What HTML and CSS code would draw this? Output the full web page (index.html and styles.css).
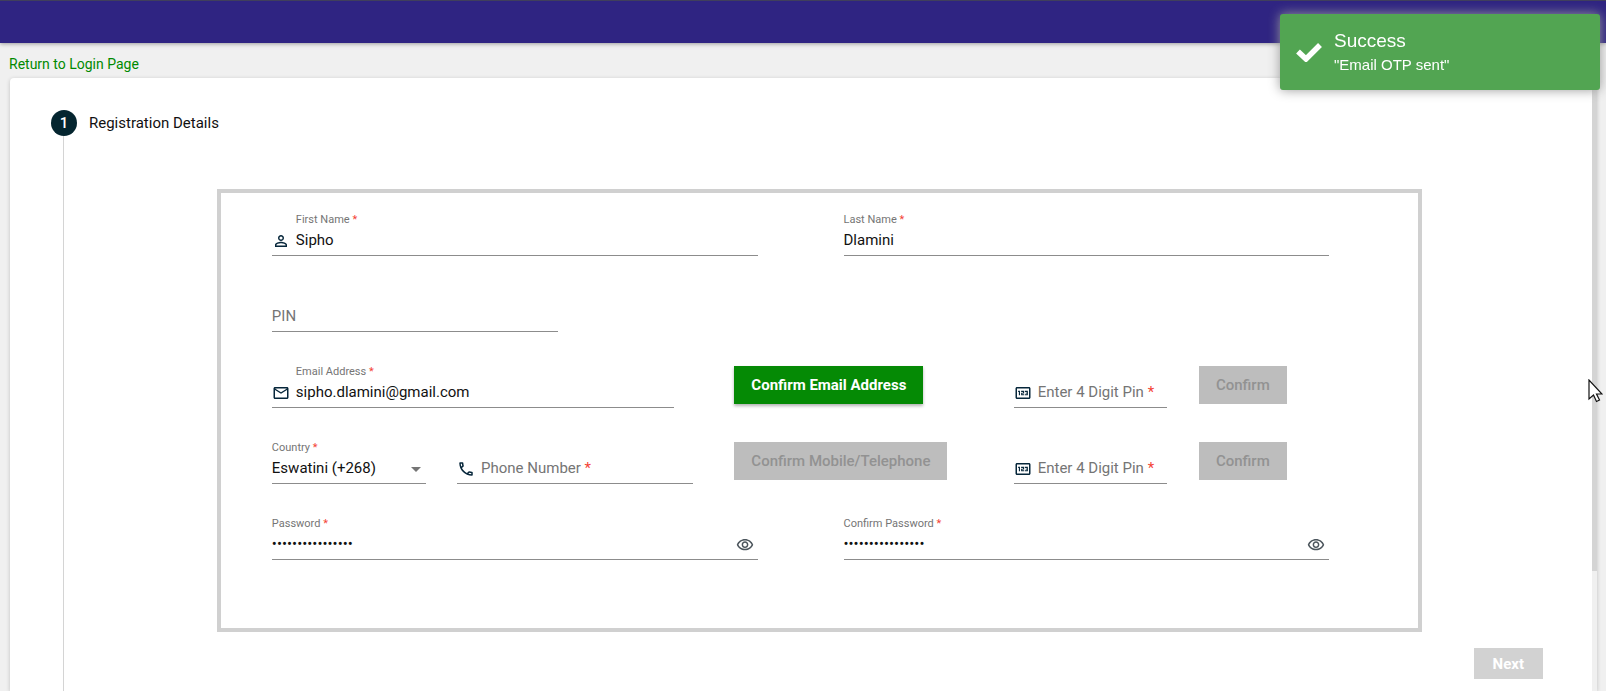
FILE: index.html
```html
<!DOCTYPE html>
<html lang="en">
	<head>
		<meta charset="utf-8">
		<title>Registration</title>
		<meta name="viewport" content="width=device-width, initial-scale=1.0">
		<link rel="stylesheet" href="styles.css">
	</head>
	<body>
		<header class="topbar"></header>
		<nav class="return">
			<a href="#login">Return to Login Page</a>
		</nav>
		<main class="card">
			<div class="stepper">
				<div class="step-header">
					<span class="step-number">1</span>
					<span class="step-label">Registration Details</span>
				</div>
				<form class="step-content">
					<div class="details">
						<div class="row names">
							<div class="field has-icon">
								<label for="first-name">First Name <span class="req">*</span></label>
								<div class="control">
									<svg class="icon" viewBox="0 0 24 24"><path d="M12 5.9a2.1 2.1 0 1 1 0 4.2 2.1 2.1 0 0 1 0-4.2m0 9c2.97 0 6.1 1.46 6.1 2.1v1.1H5.9V17c0-.64 3.13-2.1 6.1-2.1M12 4C9.79 4 8 5.79 8 8s1.79 4 4 4 4-1.79 4-4-1.79-4-4-4zm0 9c-2.67 0-8 1.34-8 4v3h16v-3c0-2.66-5.33-4-8-4z"/></svg>
									<input id="first-name" type="text" value="Sipho">
								</div>
							</div>
							<div class="field">
								<label for="last-name">Last Name <span class="req">*</span></label>
								<div class="control">
									<input id="last-name" type="text" value="Dlamini">
								</div>
							</div>
						</div>
						<div class="row pin">
							<div class="field empty">
								<label for="pin">PIN</label>
								<div class="control">
									<input id="pin" type="text">
								</div>
							</div>
						</div>
						<div class="row email">
							<div class="field has-icon">
								<label for="email">Email Address <span class="req">*</span></label>
								<div class="control">
									<svg class="icon" viewBox="0 0 24 24"><path d="M22 6c0-1.100-.9-2-2-2H4c-1.100 0-2 .9-2 2v12c0 1.100.9 2 2 2h16c1.100 0 2-.9 2-2V6zm-2 0l-8 5-8-5h16zm0 12H4V8l8 5 8-5v10z"/></svg>
									<input id="email" type="email" value="sipho.dlamini@gmail.com">
								</div>
							</div>
							<button class="btn primary" type="button">Confirm Email Address</button>
							<div class="field has-icon empty">
								<label for="email-otp">Enter 4 Digit Pin <span class="req">*</span></label>
								<div class="control">
									<svg class="icon" viewBox="0 0 24 24"><path d="M20 4H4c-1.100 0-2 .9-2 2v12c0 1.100.9 2 2 2h16c1.100 0 2-.9 2-2V6c0-1.100-.9-2-2-2zm0 14H4V6h16v12z"/><path d="M5.500 9H8v6H6.500v-4.500h-1zM9.500 9h4v3.500h-2.500v1h2.500V15h-4v-3.500H12v-1H9.500zM14.500 9h4v6h-4v-1.500H17v-1h-1.500v-1H17v-1h-2.500z"/></svg>
									<input id="email-otp" type="text">
								</div>
							</div>
							<button class="btn" type="button" disabled>Confirm</button>
						</div>
						<div class="row phone">
							<div class="field">
								<label for="country">Country <span class="req">*</span></label>
								<div class="control">
									<select id="country">
										<option>Eswatini (+268)</option>
									</select>
									<span class="caret"></span>
								</div>
							</div>
							<div class="field has-icon empty">
								<label for="phone">Phone Number <span class="req">*</span></label>
								<div class="control">
									<svg class="icon" viewBox="0 0 24 24"><path d="M6.540 5c.06.890.21 1.760.45 2.590l-1.200 1.200c-.41-1.200-.67-2.470-.76-3.790h1.510m9.860 12.020c.85.240 1.720.390 2.600.450v1.490c-1.320-.09-2.590-.35-3.800-.75l1.200-1.190M7.500 3H4c-.55 0-1 .450-1 1 0 9.390 7.610 17 17 17 .55 0 1-.45 1-1v-3.490c0-.55-.45-1-1-1-1.240 0-2.450-.2-3.570-.57-.35-.12-.75-.03-1.020.240l-2.200 2.200c-2.830-1.450-5.150-3.760-6.590-6.590l2.200-2.200c.28-.28.360-.67.250-1.020C8.700 6.450 8.500 5.250 8.500 4c0-.55-.45-1-1-1z"/></svg>
									<input id="phone" type="tel">
								</div>
							</div>
							<button class="btn" type="button" disabled>Confirm Mobile/Telephone</button>
							<div class="field has-icon empty">
								<label for="phone-otp">Enter 4 Digit Pin <span class="req">*</span></label>
								<div class="control">
									<svg class="icon" viewBox="0 0 24 24"><path d="M20 4H4c-1.100 0-2 .9-2 2v12c0 1.100.9 2 2 2h16c1.100 0 2-.9 2-2V6c0-1.100-.9-2-2-2zm0 14H4V6h16v12z"/><path d="M5.500 9H8v6H6.500v-4.500h-1zM9.500 9h4v3.500h-2.500v1h2.500V15h-4v-3.500H12v-1H9.500zM14.500 9h4v6h-4v-1.500H17v-1h-1.500v-1H17v-1h-2.500z"/></svg>
									<input id="phone-otp" type="text">
								</div>
							</div>
							<button class="btn" type="button" disabled>Confirm</button>
						</div>
						<div class="row passwords">
							<div class="field">
								<label for="password">Password <span class="req">*</span></label>
								<div class="control">
									<input id="password" type="password" value="mountainkingdom1">
									<button class="eye" type="button" aria-label="Show password">
										<svg class="icon" viewBox="0 0 24 24"><path d="M12 6c3.790 0 7.170 2.130 8.820 5.500C19.170 14.870 15.790 17 12 17s-7.170-2.130-8.820-5.500C4.830 8.130 8.210 6 12 6m0-2C7 4 2.730 7.110 1 11.500 2.730 15.890 7 19 12 19s9.270-3.110 11-7.500C21.270 7.110 17 4 12 4zm0 5c1.380 0 2.500 1.120 2.500 2.500S13.380 14 12 14s-2.500-1.120-2.500-2.500S10.620 9 12 9m0-2c-2.480 0-4.500 2.020-4.500 4.500S9.520 16 12 16s4.500-2.020 4.500-4.500S14.480 7 12 7z"/></svg>
									</button>
								</div>
							</div>
							<div class="field">
								<label for="confirm-password">Confirm Password <span class="req">*</span></label>
								<div class="control">
									<input id="confirm-password" type="password" value="mountainkingdom1">
									<button class="eye" type="button" aria-label="Show password">
										<svg class="icon" viewBox="0 0 24 24"><path d="M12 6c3.790 0 7.170 2.130 8.820 5.500C19.170 14.870 15.790 17 12 17s-7.170-2.130-8.820-5.500C4.830 8.130 8.210 6 12 6m0-2C7 4 2.730 7.110 1 11.500 2.730 15.890 7 19 12 19s9.270-3.110 11-7.500C21.270 7.110 17 4 12 4zm0 5c1.380 0 2.500 1.120 2.500 2.500S13.380 14 12 14s-2.500-1.120-2.500-2.500S10.620 9 12 9m0-2c-2.480 0-4.500 2.020-4.500 4.500S9.520 16 12 16s4.500-2.020 4.500-4.500S14.480 7 12 7z"/></svg>
									</button>
								</div>
							</div>
						</div>
					</div>
					<div class="actions">
						<button class="next" type="submit" disabled>Next</button>
					</div>
				</form>
			</div>
			<div class="scrollbar"><div class="thumb"></div></div>
		</main>

		<div class="toast" role="status">
			<svg class="toast-icon" viewBox="0 0 26 20"><path d="M2 9.500l8 7.500L24 3" fill="none" stroke="#fff" stroke-width="5.500"/></svg>
			<div>
				<div class="toast-title">Success</div>
				<div class="toast-message">"Email OTP sent"</div>
			</div>
		</div>

		<svg class="pointer" viewBox="0 0 15 24"><path d="M1 1v19l4.500-4 3 6.500 3-1.500-3-6H14z" fill="#fff" stroke="#111" stroke-width="1.200"/></svg>
	</body>
</html>
```
FILE: styles.css
```css
* {
	box-sizing: border-box;
}

body {
	display: flex;
	flex-direction: column;
	height: 100vh;
	margin: 0;
	overflow: hidden;
	background-color: #f0f0f0;
	color: #111111;
	font-family: Roboto, sans-serif;
	font-size: 15px;
}

input,
select,
button {
	font: inherit;
	color: inherit;
}

.topbar {
	flex: none;
	height: 43px;
	background-color: #2f2482;
	border-top: 1px solid #403f5c;
	box-shadow: 0 1px 4px rgba(0, 0, 0, 0.35);
}

.return {
	flex: none;
	height: 35px;
	padding: 11px 9px 0;
	font-size: 14px;
	line-height: 20px;
}

.return a {
	color: #008a00;
	text-decoration: none;
}

.card {
	flex: 1;
	display: flex;
	min-height: 0;
	margin: 0 9px 0 10px;
	background-color: #ffffff;
	border-radius: 4px 4px 0 0;
	box-shadow: 0 1px 4px rgba(0, 0, 0, 0.2);
}

.stepper {
	flex: 1;
	display: flex;
	flex-direction: column;
	overflow: hidden;
	padding: 32px 42px 0 41px;
}

.step-header {
	flex: none;
	display: flex;
	align-items: center;
	gap: 12px;
}

.step-number {
	width: 26px;
	height: 26px;
	border-radius: 50%;
	background-color: #04252f;
	color: #ffffff;
	font-weight: 500;
	line-height: 26px;
	text-align: center;
}

.step-label {
	line-height: 26px;
}

.step-content {
	flex: 1 0 auto;
	margin-left: 12px;
	padding: 53px 0 0 25px;
	border-left: 1px solid #d4d4d4;
}

.details {
	width: 82.5%;
	margin: 0 auto;
	padding: 18px 3px 68px 51px;
	border: 4px solid #d0d0d0;
}

/* form rows */
.row {
	display: grid;
	align-items: start;
}

.row + .row {
	margin-top: 31px;
}

.names,
.passwords {
	grid-template-columns: 1fr 1fr;
}

.names .field,
.passwords .field {
	width: 85%;
}

.pin .field {
	width: 25%;
}

.email {
	grid-template-columns: 462fr 279fr 185fr 216fr;
}

.email .field:first-child {
	width: 87%;
}

.phone {
	grid-template-columns: 185fr 277fr 279fr 185fr 216fr;
}

.phone .field {
	width: 85%;
}

.email .field + .btn + .field,
.phone .btn + .field,
.phone .field:first-child {
	width: 83%;
}

/* fields */
.field {
	position: relative;
	border-bottom: 1px solid #8c8c8c;
}

.field label {
	display: block;
	height: 16px;
	color: #757575;
	font-size: 11px;
	line-height: 18px;
	white-space: nowrap;
}

.has-icon label {
	padding-left: 24px;
}

.field.empty {
	padding-top: 16px;
}

.field.empty label {
	position: absolute;
	left: 0;
	top: 16px;
	height: 26px;
	font-size: 15px;
	line-height: 26px;
}

.req {
	color: #f44336;
}

.control {
	display: flex;
	align-items: center;
	height: 28px;
}

.control input,
.control select {
	flex: 1;
	width: 100%;
	min-width: 0;
	height: 28px;
	padding: 0 0 2px;
	border: 0;
	background: none;
	outline: none;
	appearance: none;
}

.icon {
	flex: none;
	display: block;
	width: 18px;
	height: 18px;
	fill: #06263a;
}

.has-icon .icon {
	margin-right: 6px;
}

.caret {
	margin-right: 5px;
	border: 5px solid transparent;
	border-top-color: #757575;
	border-bottom: 0;
}

.eye {
	padding: 0;
	margin-right: 4px;
	border: 0;
	background: none;
}

.eye .icon {
	fill: #4c555c;
}

/* buttons */
.btn {
	justify-self: start;
	height: 38px;
	margin-top: 3px;
	padding: 0 17px;
	border: 0;
	background-color: #bdbdbd;
	color: #929292;
	font-weight: 500;
	white-space: nowrap;
}

.btn.primary {
	background-color: #058a05;
	color: #ffffff;
	font-weight: 700;
	box-shadow: 0 2px 3px rgba(0, 0, 0, 0.3);
}

.actions {
	display: flex;
	justify-content: flex-end;
	padding: 16px 7px 0;
}

.next {
	height: 31px;
	padding: 0 19px;
	border: 0;
	background-color: #d2d2d2;
	color: #ffffff;
	font-weight: 700;
}

.scrollbar {
	width: 5px;
	background-color: #f0f0f0;
}

.thumb {
	height: 80.5%;
	background-color: #d4d4d4;
}

/* notification */
.toast {
	position: fixed;
	top: 14px;
	right: 6px;
	display: flex;
	align-items: center;
	gap: 12px;
	width: 320px;
	height: 76px;
	padding: 0 16px;
	border-radius: 3px;
	background-color: #52a552;
	box-shadow: 0 0 12px #999999;
	color: #ffffff;
	font-family: "Liberation Sans", sans-serif;
}

.toast-icon {
	width: 26px;
	height: 20px;
}

.toast-title {
	font-size: 19px;
	line-height: 26px;
}

.toast-message {
	line-height: 22px;
}

.pointer {
	position: fixed;
	top: 379px;
	right: 3px;
	width: 15px;
	height: 24px;
}
```
